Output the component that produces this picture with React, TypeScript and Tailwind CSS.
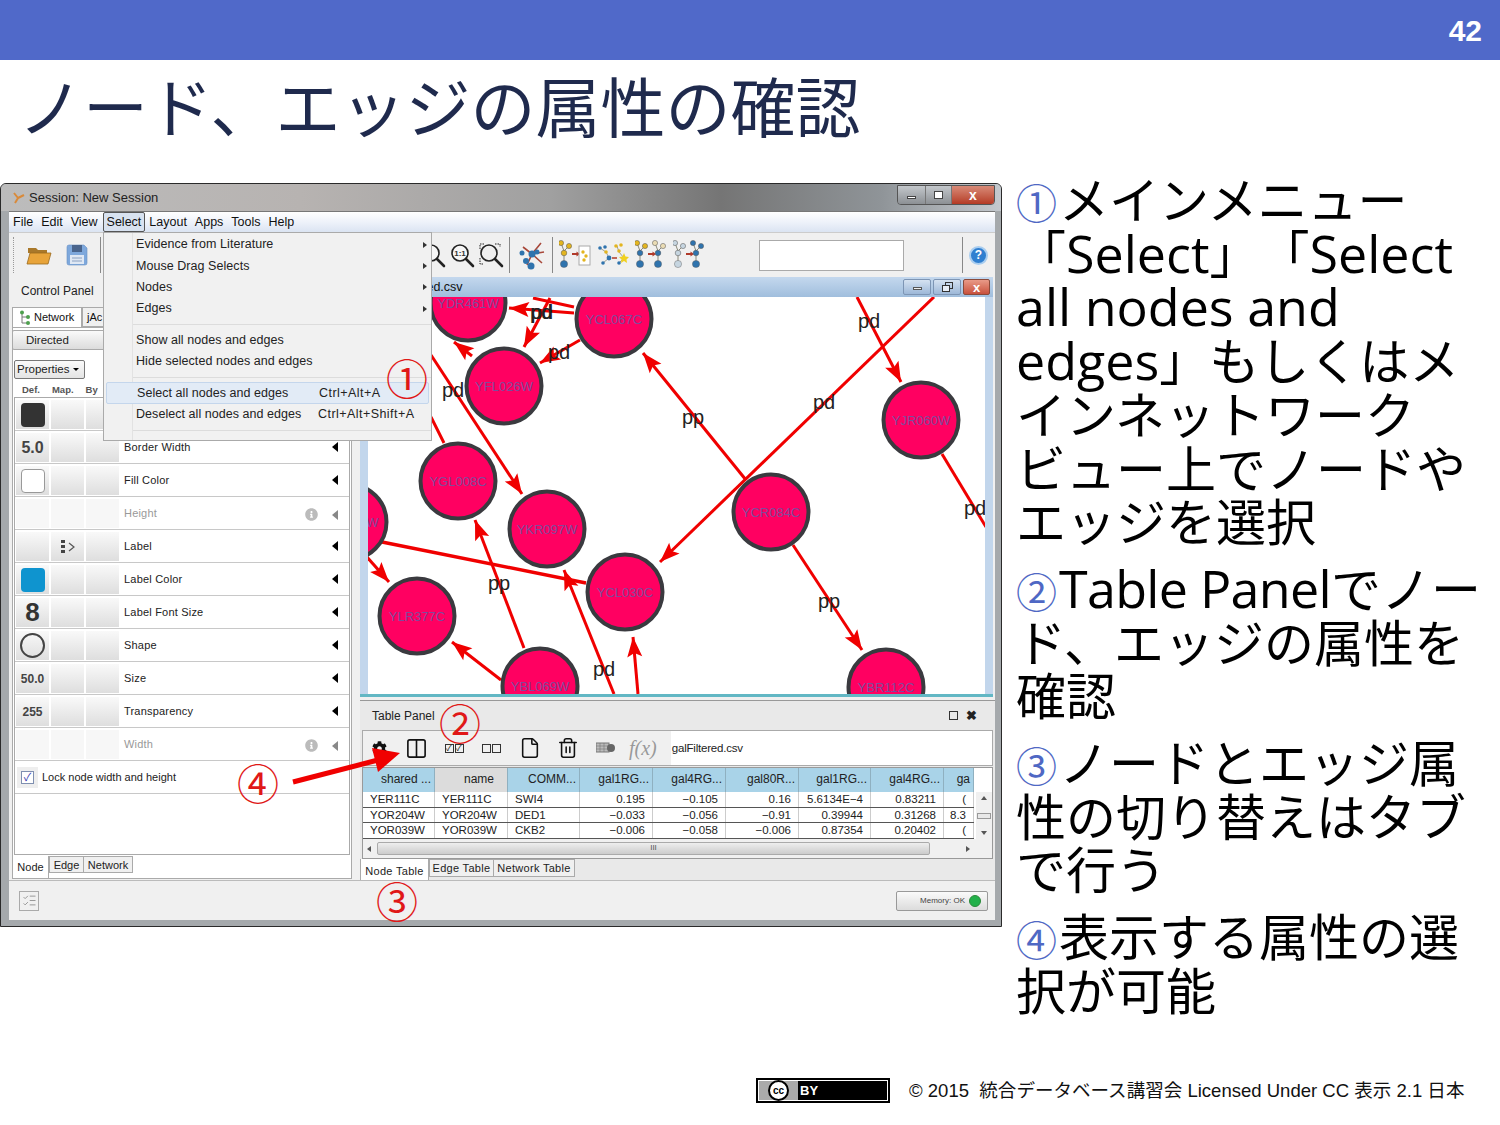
import { Columns2, File, Trash2, ListChecks } from 'lucide-react';
import { FaCog, FaInfoCircle } from 'react-icons/fa';

const SANS = 'font-["Liberation_Sans","Noto_Sans_CJK_JP",sans-serif]';

const props = [
  { def: 'dark', label: '' },
  { def: '5.0', label: 'Border Width' },
  { def: 'white', label: 'Fill Color' },
  { def: '', label: 'Height', off: true },
  { def: '', map: true, label: 'Label' },
  { def: 'blue', label: 'Label Color' },
  { def: '8', label: 'Label Font Size' },
  { def: 'circle', label: 'Shape' },
  { def: '50.0', label: 'Size' },
  { def: '255', label: 'Transparency' },
  { def: '', label: 'Width', off: true },
];

const menu = [
  ['Evidence from Literature', '', true],
  ['Mouse Drag Selects', '', true],
  ['Nodes', '', true],
  ['Edges', '', true],
  null,
  ['Show all nodes and edges', ''],
  ['Hide selected nodes and edges', ''],
  null,
  ['Select all nodes and edges', 'Ctrl+Alt+A', false, true],
  ['Deselect all nodes and edges', 'Ctrl+Alt+Shift+A'],
  null,
] as const;

const nodes = [
  ['YDR461W', 468, 303],
  ['YCL067C', 614, 319],
  ['YFL026W', 504, 386],
  ['YJR060W', 921, 420],
  ['YGL008C', 458, 481],
  ['YKR097W', 547, 529],
  ['YCR084C', 771, 512],
  ['YCL030C', 625, 592],
  ['YLR377C', 417, 616],
  ['YBL069W', 540, 686],
  ['YBR112C', 886, 687],
  ['YNL216W', 349, 522],
] as const;

// x1,y1 -> x2,y2, arrow head at the second point when flagged
const edges = [
  [934, 297, 660, 562, 1],
  [746, 480, 643, 353, 1],
  [857, 297, 901, 382, 1],
  [942, 454, 986, 527, 0],
  [793, 545, 862, 650, 1],
  [382, 542, 586, 583, 0],
  [431, 355, 522, 494, 1],
  [431, 417, 444, 443, 0],
  [524, 648, 475, 520, 1],
  [501, 680, 452, 642, 1],
  [614, 694, 564, 570, 1],
  [638, 694, 633, 637, 1],
  [367, 557, 389, 582, 1],
  [574, 313, 509, 308, 1],
  [533, 298, 574, 307, 0],
  [550, 298, 524, 347, 1],
  [580, 340, 540, 363, 1],
  [472, 356, 454, 342, 1],
] as const;

const edgeLabels = [
  ['pd', 541, 319], ['pd', 542, 319], ['pd', 559, 359], ['pd', 869, 328], ['pp', 693, 424],
  ['pd', 824, 409], ['pd', 453, 397], ['pd', 975, 515], ['pp', 499, 590], ['pp', 829, 608], ['pd', 604, 676],
] as const;

const cols = [72, 73, 72, 73, 73, 73, 72, 73, 30];
const headers = ['shared ...', 'name', 'COMM...', 'gal1RG...', 'gal4RG...', 'gal80R...', 'gal1RG...', 'gal4RG...', 'ga'];
const tableRows = [
  ['YER111C', 'YER111C', 'SWI4', '0.195', '−0.105', '0.16', '5.6134E−4', '0.83211', '('],
  ['YOR204W', 'YOR204W', 'DED1', '−0.033', '−0.056', '−0.91', '0.39944', '0.31268', '8.3'],
  ['YOR039W', 'YOR039W', 'CKB2', '−0.006', '−0.058', '−0.006', '0.87354', '0.20402', '('],
];

function Arrow({ x1, y1, x2, y2 }: { x1: number; y1: number; x2: number; y2: number }) {
  const a = Math.atan2(y2 - y1, x2 - x1);
  const c = Math.cos(a);
  const s = Math.sin(a);
  const bx = x2 - 20 * c;
  const by = y2 - 20 * s;
  const px = -s * 7.5;
  const py = c * 7.5;
  return <polygon points={`${x2},${y2} ${bx + px},${by + py} ${bx + 4 * c},${by + 4 * s} ${bx - px},${by - py}`} fill="#f00000" />;
}

function NetworkCanvas() {
  return (
    <svg viewBox="368 297 617 397" className="block w-[617px] h-[397px] bg-white">
      {edges.map(([x1, y1, x2, y2, head], i) => (
        <g key={i}>
          <line x1={x1} y1={y1} x2={x2} y2={y2} stroke="#f00000" strokeWidth={i === 5 ? 3.5 : 3} />
          {head ? <Arrow x1={x1} y1={y1} x2={x2} y2={y2} /> : null}
        </g>
      ))}
      {nodes.map(([name, cx, cy]) => (
        <g key={name}>
          <circle cx={cx} cy={cy} r={37.5} fill="#ff0061" stroke="#3a3a3f" strokeWidth={4} />
          <text x={cx} y={cy + 5} textAnchor="middle" fontSize={13} fill="#7f4a9c" fontFamily="Liberation Sans">{name}</text>
        </g>
      ))}
      {edgeLabels.map(([t, x, y], i) => (
        <text key={i} x={x} y={y} textAnchor="middle" fontSize={20} fill="#222" fontFamily="Liberation Sans">{t}</text>
      ))}
    </svg>
  );
}

const Y = '#e3b51f';
const B = '#2f73ad';
const FY = '#eadcb4';
const FB = '#c6d5e0';

function Tree({ x, top, mid, low, leaf }: { x: number; top: string; mid: string; low: string; leaf: string }) {
  return (
    <g>
      <path d={`M${x} 3 L${x + 3} 11 M${x + 8} 6 L${x + 3} 11 L${x + 3} 24`} stroke="#8a8a7a" strokeWidth="1" fill="none" />
      <circle cx={x} cy={3} r={2.6} fill={top} stroke="#555" strokeWidth="0.5" />
      <circle cx={x + 8} cy={6} r={2.6} fill={leaf} stroke="#555" strokeWidth="0.5" />
      <circle cx={x + 3} cy={13} r={2.8} fill={mid} stroke="#555" strokeWidth="0.5" />
      <circle cx={x + 3} cy={24} r={3.6} fill={low} stroke="#555" strokeWidth="0.4" />
    </g>
  );
}

function Graph({ kind }: { kind: number }) {
  const arrow = (
    <g>
      <path d="M13 14 H18" stroke="#b03a2a" strokeWidth="1.8" />
      <path d="M17.5 11.5 L21 14 L17.5 16.5 Z" fill="#b03a2a" />
    </g>
  );
  if (kind === 0) {
    return (
      <svg width="32" height="30" viewBox="0 0 32 30">
        <Tree x={2} top={Y} leaf={Y} mid={Y} low={B} />
        {arrow}
        <rect x="20" y="6" width="11" height="19" fill="#fff" stroke="#aaa" />
        <circle cx="24" cy="12" r="1.7" fill={Y} /><circle cx="27" cy="16" r="1.7" fill={Y} /><circle cx="25" cy="20" r="1.7" fill={Y} />
      </svg>
    );
  }
  if (kind === 1) {
    return (
      <svg width="32" height="30" viewBox="0 0 32 30">
        <path d="M3 8 L9 12 L12 18 L6 23 M20 6 L22 12 L27 18 L22 23" stroke="#8a8a7a" strokeWidth="0.8" fill="none" />
        <circle cx="3" cy="8" r="1.8" fill={B} /><circle cx="8" cy="7" r="1.8" fill={B} /><circle cx="9" cy="12" r="1.8" fill={Y} />
        <circle cx="12" cy="18" r="2.4" fill={B} /><circle cx="6" cy="23" r="1.8" fill={B} />
        <circle cx="19" cy="6" r="1.8" fill={Y} /><circle cx="24" cy="5" r="1.8" fill={Y} /><circle cx="22" cy="11" r="1.8" fill={Y} /><circle cx="22" cy="23" r="1.8" fill={B} />
        <path d="M15 18 H20" stroke="#b03a2a" strokeWidth="1.5" />
        <path d="M27 13 L28.5 16.5 L32 17 L29.5 19.5 L30 23 L27 21 L24 23 L24.5 19.5 L22 17 L25.5 16.5 Z" fill="#f0d020" />
      </svg>
    );
  }
  return (
    <svg width="32" height="30" viewBox="0 0 32 30">
      {kind === 2 ? <Tree x={2} top={Y} leaf={Y} mid={B} low={B} /> : <Tree x={2} top={FB} leaf={FB} mid={FB} low={FB} />}
      {arrow}
      {kind === 2 ? <Tree x={20} top={FY} leaf={FY} mid={B} low={B} /> : <Tree x={20} top={B} leaf={B} mid={B} low={B} />}
    </svg>
  );
}

function ZoomIcon({ kind }: { kind: number }) {
  return (
    <svg width="25" height="25" viewBox="0 0 25 25">
      <circle cx="10" cy="10" r="8" fill={kind === 2 ? '#eee' : '#f6f6f6'} stroke="#222" strokeWidth="1.6" />
      <path d="M16 16 L23 23" stroke="#222" strokeWidth="2.6" strokeLinecap="round" />
      {kind === 1 && <text x="10" y="13" textAnchor="middle" fontSize="8" fontWeight="700" fill="#333" fontFamily="Liberation Sans">1:1</text>}
      {kind === 2 && <path d="M1 6 V1 H6 M16 1 H21 V4 M1 15 V21 H5" fill="none" stroke="#222" strokeWidth="1" strokeDasharray="1.5 1" />}
    </svg>
  );
}

function Def({ kind }: { kind: string }) {
  if (kind === 'dark') return <div className="w-[24px] h-[24px] rounded-[4px] bg-[#333]" />;
  if (kind === 'white') return <div className="w-[24px] h-[24px] rounded-[4px] bg-white border border-[#999]" />;
  if (kind === 'blue') return <div className="w-[24px] h-[24px] rounded-[4px] bg-[#0f94cf]" />;
  if (kind === 'circle') return <div className="w-[25px] h-[25px] rounded-full border-2 border-[#444]" />;
  if (kind === '8') return <span className="text-[26px] font-bold text-[#333]">8</span>;
  if (kind === '5.0') return <span className="text-[16px] font-bold text-[#444]">5.0</span>;
  return <span className="text-[12px] font-bold text-[#444]">{kind}</span>;
}

function PropRow({ def, label, map, off }: { def: string; label: string; map?: boolean; off?: boolean }) {
  const cell = off ? 'bg-[#f7f7f7]' : 'bg-linear-to-b from-[#f9f9f9] to-[#dedede]';
  return (
    <div className="h-[33px] shrink-0 flex items-start border-b border-[#c8c8c8] pl-[1px] bg-white">
      <div className={`w-[33px] h-[29px] mt-[2px] flex items-center justify-center ${cell}`}><Def kind={def} /></div>
      <div className={`w-[33px] h-[29px] mt-[2px] ml-[2px] flex items-center justify-center ${cell}`}>
        {map && (
          <svg width="14" height="14" viewBox="0 0 14 14">
            <rect x="0" y="0" width="4" height="3" fill="#444" /><rect x="0" y="5" width="4" height="3" fill="#444" /><rect x="0" y="10" width="4" height="3" fill="#444" />
            <path d="M8 3 L13 7 L8 11" fill="none" stroke="#555" strokeWidth="1.2" />
          </svg>
        )}
      </div>
      <div className={`w-[33px] h-[29px] mt-[2px] ml-[2px] ${cell}`} />
      <span className={`ml-[5px] mt-[9px] text-[11px] leading-[14px] tracking-[0.2px] ${off ? 'text-[#999]' : 'text-[#222]'}`}>{label}</span>
      <div className="ml-auto mr-[11px] mt-[11px] flex items-center gap-[14px]">
        {off && <FaInfoCircle className="text-[#bbb] w-[13px] h-[13px]" />}
        <div className={`w-0 h-0 border-y-[5px] border-y-transparent border-r-[6px] ${off ? 'border-r-[#888]' : 'border-r-black'}`} />
      </div>
    </div>
  );
}

function Folder() {
  return (
    <svg width="26" height="20" viewBox="0 0 26 20">
      <path d="M2 3 H10 L12 5 H21 V8 H2 Z" fill="#a9782a" />
      <path d="M4 8 H25 L22 19 H1 Z" fill="#e8a43a" stroke="#9a6a1c" strokeWidth="0.8" />
    </svg>
  );
}

function Save() {
  return (
    <svg width="24" height="24" viewBox="0 0 24 24">
      <path d="M2 4 Q2 2 4 2 H19 L22 5 V20 Q22 22 20 22 H4 Q2 22 2 20 Z" fill="#7ea8dc" stroke="#6a90c4" strokeWidth="0.6" />
      <rect x="7" y="2" width="10" height="7" fill="#49648c" />
      <rect x="5" y="12" width="14" height="9" fill="#dfe8f4" />
      <path d="M7 15 H17 M7 18 H17" stroke="#8aa0c0" />
    </svg>
  );
}

function TitleButtons() {
  return (
    <div className="flex h-[16px] mr-[3px] gap-[2px]">
      <div className="w-[28px] rounded-[2px] bg-linear-to-b from-[#d5e2f1] to-[#9db8d8] border border-[#7d95b4] flex items-center justify-center"><div className="w-[9px] h-[3px] bg-[#eee] border border-[#555] mt-[3px]" /></div>
      <div className="w-[28px] rounded-[2px] bg-linear-to-b from-[#d5e2f1] to-[#9db8d8] border border-[#7d95b4] flex items-center justify-center">
        <svg width="11" height="10" viewBox="0 0 11 10"><rect x="3.5" y="0.5" width="7" height="6" fill="none" stroke="#333" /><rect x="0.5" y="3.5" width="7" height="6" fill="#e8eef6" stroke="#333" /></svg>
      </div>
      <div className="w-[27px] rounded-[2px] bg-linear-to-b from-[#e89a88] to-[#c8503c] border border-[#8a4a3a] flex items-center justify-center text-[13px] font-bold leading-none text-white">x</div>
    </div>
  );
}

function SoftwareWindow() {
  return (
    <div className={`relative w-[1002px] h-[744px] shrink-0 rounded-t-[6px] border border-[#2a2a2a] bg-[#a5a9ac] flex flex-col overflow-hidden ${SANS}`}>
      {/* title bar */}
      <div className="h-[27px] shrink-0 flex items-center pl-[11px] bg-[linear-gradient(90deg,#bcbcbc_0%,#b7b3b1_30%,#a0a0a0_55%,#757575_72%,#8f9498_88%,#c4c9ce_100%)]">
        <svg width="14" height="14" viewBox="0 0 14 14" className="mr-[3px]">
          <path d="M2 2 L6 7 L3 12 M6 7 L12 4" stroke="#d98a3a" strokeWidth="2" fill="none" />
        </svg>
        <span className="text-[13px] text-[#222]">Session: New Session</span>
        <div className="ml-auto mr-[6px] flex h-[20px] -mt-[6px] rounded-b-[4px] border border-[#555] overflow-hidden">
          <div className="w-[28px] bg-linear-to-b from-[#c4c8cc] to-[#8c9094] flex items-center justify-center border-r border-[#777]"><div className="w-[9px] h-[3px] bg-white border border-[#444] mt-[5px]" /></div>
          <div className="w-[26px] bg-linear-to-b from-[#c4c8cc] to-[#8c9094] flex items-center justify-center border-r border-[#777]"><div className="w-[9px] h-[8px] bg-white border border-[#444]" /></div>
          <div className="w-[42px] bg-linear-to-b from-[#d88a78] to-[#b43a24] flex items-center justify-center text-[14px] font-bold leading-none text-white">x</div>
        </div>
      </div>

      <div className="ml-[8px] mr-[6px] flex flex-col bg-[#f0f0f0]">
        {/* menu bar */}
        <div className="h-[21px] shrink-0 flex items-center pl-[4px] gap-[8px] text-[12.5px] text-[#111] bg-linear-to-b from-[#ffffff] via-[#eef2fa] to-[#dbe4f2] border-t border-[#777]">
          <span>File</span><span>Edit</span><span>View</span>
          <span className="border border-[#555] rounded-[2px] bg-[#d8e2f0] px-[3px] -ml-[3px] -mr-[4px]">Select</span>
          <span>Layout</span><span>Apps</span><span>Tools</span><span>Help</span>
        </div>

        {/* toolbar */}
        <div className="h-[45px] shrink-0 flex items-center bg-[#f0f0f0] border-t border-[#ccc] relative">
          <div className="ml-[4px] w-[2px] h-[36px] border-l border-dotted border-[#999]" />
          <div className="ml-[11px]"><Folder /></div>
          <div className="ml-[13px]"><Save /></div>
          <div className="ml-[11px] w-px h-[36px] bg-[#888]" />
          <div className="ml-[320px] flex items-center gap-[4px]">
            <ZoomIcon kind={0} /><ZoomIcon kind={1} /><ZoomIcon kind={2} />
          </div>
          <div className="ml-[5px] w-px h-[36px] bg-[#888]" />
          <svg width="30" height="32" viewBox="0 0 30 32" className="ml-[7px]">
            <path d="M15 15 L6 8 M15 15 L27 13 M15 15 L24 4 M15 15 L10 26 M15 15 L25 24" stroke="#a8483a" strokeWidth="1.6" />
            <circle cx="15" cy="15" r="3.5" fill={B} /><circle cx="9" cy="22" r="3" fill={B} /><circle cx="14" cy="27" r="3.5" fill={B} /><circle cx="5" cy="14" r="2.5" fill={B} /><circle cx="20" cy="13" r="2.5" fill={B} />
          </svg>
          <div className="ml-[5px] w-px h-[36px] bg-[#888]" />
          <div className="ml-[6px] flex gap-[6px]">
            <Graph kind={0} /><Graph kind={1} /><Graph kind={2} /><Graph kind={3} />
          </div>
          <div className="ml-[54px] w-[145px] h-[31px] bg-white border border-[#aaa]" />
          <div className="ml-[58px] w-px h-[36px] bg-[#888]" />
          <div className="ml-[6px] w-[19px] h-[19px] rounded-full bg-[#2f7fd0] border-2 border-[#a9cdef] text-white text-[12px] font-bold flex items-center justify-center">?</div>
        </div>

        {/* body */}
        <div className="h-[603px] shrink-0 flex gap-[5px]">
          {/* control panel */}
          <div className="w-[346px] shrink-0 flex flex-col">
            <div className="h-[30px] pl-[12px] pt-[5px] text-[12px] text-[#222]">Control Panel</div>
            <div className="h-[20px] flex pl-[3px] text-[11px] text-[#111]">
              <div className="w-[70px] border border-[#aaa] border-b-0 bg-white flex items-center gap-[3px] pl-[6px]">
                <svg width="12" height="15" viewBox="0 0 12 15">
                  <path d="M3 2 V13 H9 M3 7 H9" stroke="#777" fill="none" />
                  <circle cx="3" cy="2.5" r="2" fill="#4ea04e" /><circle cx="9" cy="7" r="2" fill="#4ea04e" /><circle cx="9" cy="13" r="2" fill="#4ea04e" />
                </svg>
                Network
              </div>
              <div className="w-[30px] border border-[#aaa] bg-[#f0f0f0] pl-[4px] leading-[18px]">jAc</div>
            </div>
            <div className="h-[552px] flex flex-col bg-white border border-[#aaa] mx-[3px] w-[340px]">
              <div className="h-[20px] mt-[2px] -ml-px w-[120px] rounded-[2px] border border-[#aaa] bg-linear-to-b from-[#fafafa] to-[#dcdcdc] text-[11.5px] pl-[13px] leading-[18px] text-[#222]">Directed</div>
              <div className="h-[19px] mt-[10px] ml-[1px] w-[71px] rounded-[2px] border border-[#777] bg-linear-to-b from-[#fafafa] to-[#e4e4e4] text-[11.5px] pl-[2px] leading-[17px] text-[#222] flex items-center gap-[4px]">
                Properties<div className="w-0 h-0 border-x-[3px] border-x-transparent border-t-[3px] border-t-black" />
              </div>
              <div className="h-[18px] flex items-end text-[9.5px] font-bold text-[#555] pl-[9px] gap-[12px]">
                <span>Def.</span><span>Map.</span><span>By</span>
              </div>
              <div className="h-[458px] shrink-0 mx-[1px] border border-[#aaa] bg-white flex flex-col">
                {props.map((p, i) => <PropRow key={i} {...p} />)}
                <div className="h-[33px] shrink-0 flex items-center border-b border-[#c8c8c8] pl-[2px]">
                  <div className="w-[21px] h-[21px] bg-[#eee] flex items-center justify-center">
                    <div className="w-[13px] h-[13px] border border-[#7f8fb0] bg-white flex items-center justify-center text-[11px] leading-none text-[#3a3ab0]">✓</div>
                  </div>
                  <span className="ml-[4px] text-[11px] text-[#222]">Lock node width and height</span>
                </div>
              </div>
              <div className="mt-auto flex items-start text-[11px] text-[#222]">
                <div className="w-[36px] h-[22px] border-r border-[#aaa] bg-white text-center leading-[22px]">Node</div>
                <div className="w-[35px] h-[17px] border border-[#aaa] bg-[#f0f0f0] text-center leading-[16px]">Edge</div>
                <div className="w-[49px] h-[17px] border border-[#aaa] border-l-0 bg-[#f0f0f0] text-center leading-[16px]">Network</div>
              </div>
            </div>
          </div>

          {/* network view + table */}
          <div className="w-[635px] shrink-0 flex flex-col">
            <div className="h-[420px] w-[633px] flex flex-col bg-[#c2d6ec] border-b-[3px] border-[#62b7c4]">
              <div className="h-[20px] shrink-0 flex items-center justify-between bg-linear-to-b from-[#c4d8ee] to-[#a0bedd] text-[12.5px] text-[#111]">
                <span className="pl-[22px]">galFiltered.csv</span>
                <TitleButtons />
              </div>
              <div className="pl-[8px]"><NetworkCanvas /></div>
            </div>
            <div className="h-[180px] mt-[3px] flex flex-col bg-[#e9e9e9] border-t border-[#999]">
              <div className="h-[29px] shrink-0 flex items-center pl-[12px] text-[12px] text-[#222]">
                Table Panel
                <div className="ml-auto mr-[18px] flex items-center gap-[8px]">
                  <div className="w-[9px] h-[9px] border border-[#333]" />
                  <span className="font-bold text-[13px] leading-none">✖</span>
                </div>
              </div>
              <div className="h-[36px] shrink-0 ml-[2px] w-[631px] flex items-center border border-[#aaa] bg-[#f0f0f0]">
                <FaCog className="ml-[9px] w-[15px] h-[15px] text-[#111]" />
                <Columns2 className="ml-[18px] w-[23px] h-[23px] text-[#111]" strokeWidth={1.7} />
                <div className="ml-[17px] flex gap-[1px]">
                  <div className="w-[9px] h-[9px] border border-[#333] text-[8px] leading-[7px]">✓</div>
                  <div className="w-[9px] h-[9px] border border-[#333] text-[8px] leading-[7px]">✓</div>
                </div>
                <div className="ml-[18px] flex gap-[1px]">
                  <div className="w-[9px] h-[9px] border border-[#333]" />
                  <div className="w-[9px] h-[9px] border border-[#333]" />
                </div>
                <File className="ml-[18px] w-[22px] h-[22px] text-[#111]" strokeWidth={1.7} />
                <Trash2 className="ml-[16px] w-[22px] h-[22px] text-[#111]" strokeWidth={1.7} />
                <svg width="20" height="12" viewBox="0 0 20 12" className="ml-[17px]">
                  <rect x="0" y="1" width="13" height="9" fill="#bbb" stroke="#777" />
                  <path d="M0 4 H13 M0 7 H13 M4 1 V10 M8 1 V10" stroke="#777" strokeWidth="0.6" />
                  <circle cx="15" cy="6" r="4" fill="#666" />
                </svg>
                <span className="ml-[13px] font-['Liberation_Serif',serif] italic text-[20px] text-[#999]">f(x)</span>
                <div className="ml-[14px] flex-1 h-[34px] bg-white pl-[1px] text-[11.5px] leading-[34px] text-[#222] tracking-[-0.2px]">galFiltered.csv</div>
              </div>
              <div className="h-[92px] shrink-0 mt-[1px] ml-[2px] w-[631px] border border-[#999] bg-white flex flex-col">
                <div className="flex h-[71px]">
                  <div className="w-[611px] shrink-0 overflow-hidden text-[11.5px] text-[#222]">
                    <div className="flex h-[24px]">
                      {headers.map((h, i) => (
                        <div key={i} style={{ width: cols[i] }} className={`shrink-0 border-r border-[#8fb0c0] text-right pr-[3px] text-[12px] leading-[22px] ${i === 1 ? 'bg-[#dcdcdc] pr-[13px]' : 'bg-[#a9d3e8]'}`}>{h}</div>
                      ))}
                    </div>
                    {tableRows.map((r, ri) => (
                      <div key={ri} className="flex h-[15.5px] border-b border-[#555]">
                        {r.map((c, i) => (
                          <div key={i} style={{ width: cols[i] }} className={`shrink-0 border-r border-[#ccc] leading-[15px] whitespace-nowrap overflow-hidden ${i < 3 ? 'pl-[7px]' : 'text-right pr-[7px]'}`}>{c}</div>
                        ))}
                      </div>
                    ))}
                  </div>
                  <div className="ml-auto w-[16px] mt-[24px] flex flex-col items-center justify-between py-[4px] bg-[#f0f0f0]">
                    <div className="w-0 h-0 border-x-[3px] border-x-transparent border-b-[4px] border-b-[#555]" />
                    <div className="w-[14px] h-[6px] border border-[#999] bg-[#e8e8e8]" />
                    <div className="w-0 h-0 border-x-[3px] border-x-transparent border-t-[4px] border-t-[#555]" />
                  </div>
                </div>
                <div className="flex-1 flex items-center bg-[#f0f0f0] px-[4px]">
                  <div className="w-0 h-0 border-y-[3px] border-y-transparent border-r-[4px] border-r-[#555]" />
                  <div className="ml-[6px] w-[553px] h-[13px] rounded-[2px] border border-[#aaa] bg-linear-to-b from-[#eee] to-[#ccc] text-center text-[8px] leading-[10px] text-[#555]">III</div>
                  <div className="ml-auto mr-[18px] w-0 h-0 border-y-[3px] border-y-transparent border-l-[4px] border-l-[#555]" />
                </div>
              </div>
              <div className="flex items-start text-[11px] text-[#222] tracking-[0.3px]">
                <div className="w-[69px] h-[22px] bg-white border-l border-r border-[#aaa] text-center leading-[24px]">Node Table</div>
                <div className="w-[65px] h-[18px] border border-[#aaa] bg-[#f0f0f0] text-center leading-[16px]">Edge Table</div>
                <div className="w-[81px] h-[18px] border border-[#aaa] border-l-0 bg-[#f0f0f0] text-center leading-[16px]">Network Table</div>
              </div>
            </div>
          </div>
        </div>

        {/* status bar */}
        <div className="h-[40px] shrink-0 flex items-center bg-[#f0f0f0] border-t border-[#bbb]">
          <div className="ml-[10px] w-[20px] h-[20px] border border-[#aaa] flex items-center justify-center">
            <ListChecks className="w-[15px] h-[15px] text-[#999]" strokeWidth={1.6} />
          </div>
          <div className="ml-auto mr-[7px] w-[92px] h-[20px] rounded-[2px] border border-[#999] bg-linear-to-b from-[#fafafa] to-[#dcdcdc] flex items-center justify-end gap-[4px] pr-[6px] text-[8px] text-[#444]">
            Memory: OK
            <div className="w-[12px] h-[12px] rounded-full bg-[#22b04a] border border-[#2a8a3a]" />
          </div>
        </div>
      </div>

      {/* Select menu */}
      <div className="absolute left-[102px] top-[48px] w-[329px] h-[209px] bg-[#f1f1f1] border border-[#aaa] pt-[1px] text-[12.5px] text-[#222]">
        <div className="absolute left-[28px] top-0 bottom-0 w-px bg-[#e2e2e2]" />
        {menu.map((m, i) =>
          m === null ? (
            <div key={i} className="h-[10px] ml-[29px] flex items-center"><div className="w-full h-px bg-[#dcdcdc]" /></div>
          ) : (
            <div key={i} className={`relative h-[21.4px] mx-[2px] pl-[30px] flex items-center ${m[3] ? 'bg-[#e2ebf6] border border-[#c4d6ec] rounded-[2px]' : ''}`}>
              <span className="tracking-[0.05px]">{m[0]}</span>
              <span className="absolute left-[212px] tracking-[0.45px]">{m[1]}</span>
              {m[2] && <div className="absolute right-[2px] w-0 h-0 border-y-[3px] border-y-transparent border-l-[4px] border-l-[#333]" />}
            </div>
          ),
        )}
      </div>

      {/* annotations */}
      <span className="absolute left-[385px] top-[168px] text-[42px] leading-[50px] text-[#e01818] font-['Noto_Sans_CJK_JP',sans-serif]">①</span>
      <span className="absolute left-[438px] top-[513px] text-[42px] leading-[50px] text-[#e01818] font-['Noto_Sans_CJK_JP',sans-serif]">②</span>
      <span className="absolute left-[375px] top-[691px] text-[42px] leading-[50px] text-[#e01818] font-['Noto_Sans_CJK_JP',sans-serif]">③</span>
      <span className="absolute left-[236px] top-[573px] text-[42px] leading-[50px] text-[#e01818] font-['Noto_Sans_CJK_JP',sans-serif]">④</span>
      <svg className="absolute left-[285px] top-[560px]" width="120" height="45" viewBox="0 0 120 45">
        <path d="M7 38 L92 16" stroke="#f00000" strokeWidth="5" />
        <polygon points="114,9 86,4 92,28" fill="#f00000" />
      </svg>
    </div>
  );
}

function Badge() {
  return (
    <div className="w-[134px] h-[25px] border-[2px] border-black shrink-0">
      <div className="h-full border border-white bg-black flex items-center">
        <div className="h-full w-[39px] bg-[#aaa] flex items-center justify-center">
          <div className="w-[21px] h-[21px] rounded-full bg-white border-[2px] border-black flex items-center justify-center text-[10px] font-bold leading-none text-black">cc</div>
        </div>
        <span className="ml-[2px] text-[13px] font-bold text-white">BY</span>
      </div>
    </div>
  );
}

function Num({ children }: { children: string }) {
  return <span className="text-[41px] leading-[0] text-[#4f68c4] mr-[2px]">{children}</span>;
}

function Latin({ children, tight }: { children: string; tight?: boolean }) {
  return <span className={`text-[52px] leading-[0] ${tight ? 'tracking-[-0.7px]' : ''}`}>{children}</span>;
}

export default function App() {
  return (
    <div className={`w-[1500px] h-[1125px] overflow-hidden bg-white flex flex-col ${SANS}`}>
      <header className="h-[60px] shrink-0 bg-[#5069c9] flex items-center justify-end pr-[18px]">
        <span className="text-[30px] font-bold text-white">42</span>
      </header>

      <div className="h-[114px] shrink-0 pl-[18px] pt-[6px]">
        <h1 className="text-[65px] leading-[76px] font-normal text-[#1f2a4d] font-['Noto_Sans_CJK_JP',sans-serif]">ノード、エッジの属性の確認</h1>
      </div>

      <main className="flex-1 flex items-start">
        <div className="pt-[9px]"><SoftwareWindow /></div>
        <div className="ml-[14px] w-[484px] flex flex-col gap-[13px] text-[50px] leading-[53.7px] text-black whitespace-nowrap [text-spacing-trim:space-all] font-['Open_Sans','Noto_Sans_CJK_JP',sans-serif]">
          <p><Num>①</Num>メインメニュー<br />「<Latin>Select</Latin>」「<Latin>Select</Latin><br /><Latin>all nodes and</Latin><br /><Latin>edges</Latin>」もしくはメ<br />インネットワーク<br />ビュー上でノードや<br />エッジを選択</p>
          <p><Num>②</Num><Latin tight>Table Panel</Latin>でノー<br />ド、エッジの属性を<br />確認</p>
          <p><Num>③</Num>ノードとエッジ属<br />性の切り替えはタブ<br />で行う</p>
          <p><Num>④</Num>表示する属性の選<br />択が可能</p>
        </div>
      </main>

      <footer className="h-[47px] shrink-0 pl-[756px] flex items-start gap-[19px]">
        <Badge />
        <span className="text-[18.55px] leading-[25px] text-[#111] whitespace-nowrap">© 2015 &nbsp;統合データベース講習会 Licensed Under CC 表示 2.1 日本</span>
      </footer>
    </div>
  );
}
